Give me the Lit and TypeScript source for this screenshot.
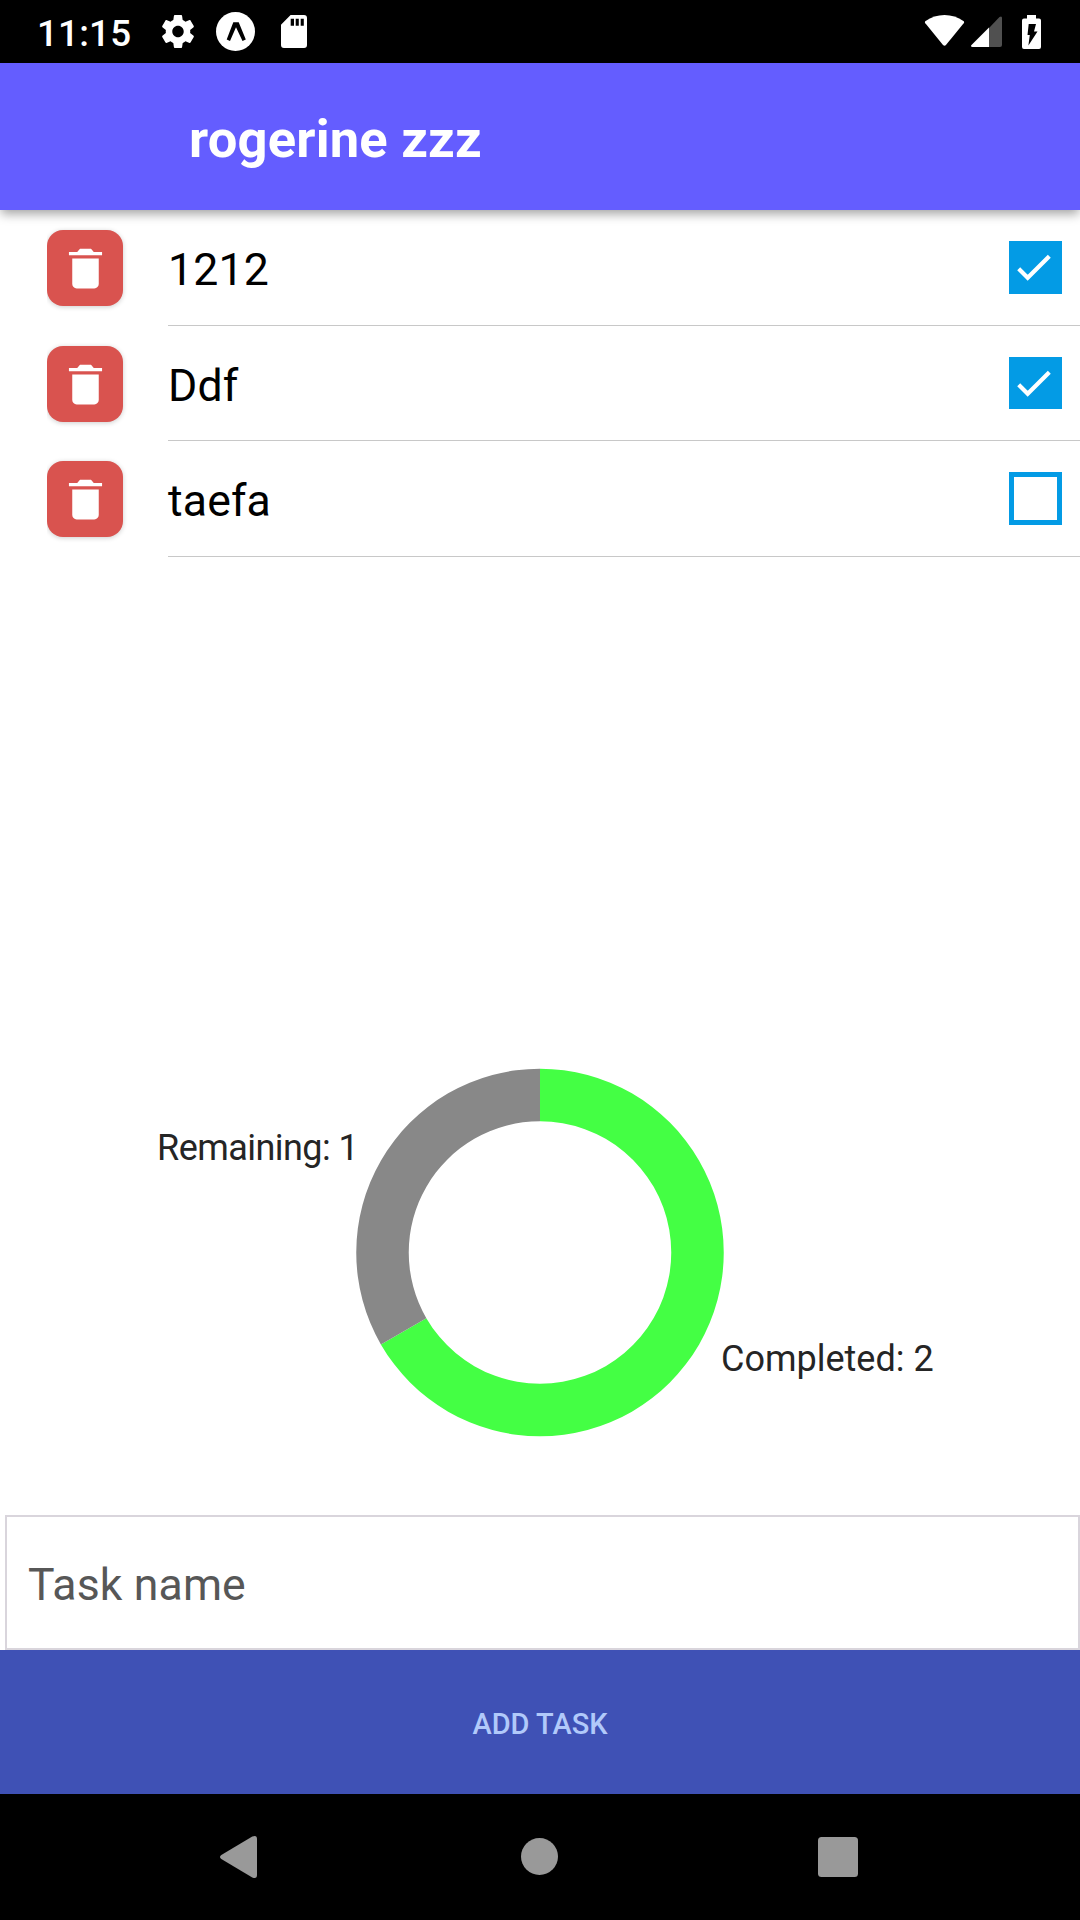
import { LitElement, html, svg, css } from "lit";
import { customElement, property, state } from "lit/decorators.js";

interface Task {
  name: string;
  done: boolean;
}

@customElement("status-bar")
class StatusBar extends LitElement {
  static styles = css`
    :host { display: block; height: 63px; background: #000; }
    .bar { display: flex; align-items: center; height: 63px; box-sizing: border-box; padding: 0 39px 0 37px; }
    .time { color: #fff; font-size: 36.75px; font-weight: 500; line-height: 59px; letter-spacing: 0.2px; padding-top: 4px; width: 125px; }
    svg { display: block; flex: none; }
    .expo { margin-left: 22px; }
    .sd { margin-left: 26px; }
    .spacer { flex: 1; }
    .wifi { margin-bottom: 2px; }
    .signal { margin-left: 6px; }
    .battery { margin-left: 20px; }
  `;
  render() {
    return html`<div class="bar">
      <div class="time">11:15</div>
      <svg width="32" height="33" viewBox="2.2 2 19.6 20" preserveAspectRatio="none">
        <path fill="#fff" d="M19.43 12.98c.04-.32.07-.64.07-.98s-.03-.66-.07-.98l2.11-1.65c.19-.15.24-.42.12-.64l-2-3.46c-.12-.22-.39-.3-.61-.22l-2.49 1c-.52-.4-1.08-.73-1.69-.98l-.38-2.65C14.46 2.18 14.25 2 14 2h-4c-.25 0-.46.18-.49.42l-.38 2.65c-.61.25-1.17.59-1.69.98l-2.49-1c-.23-.09-.49 0-.61.22l-2 3.46c-.13.22-.07.49.12.64l2.11 1.65c-.04.32-.07.65-.07.98s.03.66.07.98l-2.11 1.65c-.19.15-.24.42-.12.64l2 3.46c.12.22.39.3.61.22l2.49-1c.52.4 1.08.73 1.69.98l.38 2.65c.03.24.24.42.49.42h4c.25 0 .46-.18.49-.42l.38-2.65c.61-.25 1.17-.59 1.69-.98l2.49 1c.23.09.49 0 .61-.22l2-3.46c.12-.22.07-.49-.12-.64l-2.11-1.65zM12 15.5c-1.93 0-3.5-1.57-3.5-3.5s1.57-3.5 3.5-3.5 3.5 1.57 3.5 3.5-1.57 3.5-3.5 3.5z"/>
      </svg>
      <svg class="expo" width="39" height="39" viewBox="0 0 39 39">
        <circle cx="19.5" cy="19.5" r="19.5" fill="#fff"/>
        <path fill="#000" d="M17.3 10.3h5.4l7.1 17.2-3.3 1.500L20 15.300 14 29l-3.300-1.500z"/>
      </svg>
      <svg class="sd" width="26" height="33" viewBox="0 0 26 33">
        <path fill="#fff" fill-rule="evenodd" d="M9.600 0H23q3 0 3 3v27q0 3-3 3H3q-3 0-3-3V9.700zM9.700 3.700v7h3.300v-7zM14.700 3.700v7h3.100v-7zM19.700 3.700v7h3.100v-7z"/>
      </svg>
      <div class="spacer"></div>
      <svg class="wifi" width="41" height="32" viewBox="0 0 41 33">
        <path fill="#fff" d="M1 6.300C12-2.100 29-2.100 40 6.300q1.300 1 .3 2.300L22 31q-1.500 1.600-3 0L.7 8.600Q-.3 7.300 1 6.300z"/>
      </svg>
      <svg class="signal" width="31" height="31" viewBox="0 0 31 31">
        <path fill="#505050" d="M18 12L28.500 1q2.500-1.500 2.500 1v27q0 2-2 2H18z"/>
        <path fill="#fff" d="M18 11.500V31H1.500Q-.8 30.500.5 29z"/>
      </svg>
      <svg class="battery" width="19" height="34" viewBox="0 0 19 34">
        <path fill="#fff" d="M5 0h9v3.500h3q2 0 2 2V32q0 2-2 2H2q-2 0-2-2V5.500q0-2 2-2h3z"/>
        <path fill="#000" d="M6.700 9h7.300l-2 7.500h3.500L6.400 30.500l1.400-10.500H5.500z"/>
      </svg>
    </div>`;
  }
}

@customElement("task-row")
class TaskRow extends LitElement {
  @property() name = "";
  @property({ type: Boolean }) done = false;

  static styles = css`
    :host { display: flex; height: 116px; padding-left: 47px; box-sizing: border-box; }
    .remove {
      margin: 20px 45px 0 0; padding: 0; border: 0; width: 76px; height: 76px; flex: none;
      border-radius: 16px; background: #d9534f; display: flex; align-items: center; justify-content: center;
      box-shadow: 0 1px 5px rgba(0, 0, 0, 0.2); clip-path: inset(-12px -12px -12px 0);
    }
    .body { flex: 1; display: flex; box-sizing: border-box; border-bottom: 1px solid #c8c8c8; padding: 31px 18px 31px 0; }
    .name { flex: 1; font-size: 44.6px; line-height: 53px; letter-spacing: 0.15px; padding-top: 3px; height: 50px; color: #000; }
    .box { width: 53px; box-sizing: border-box; border: 5px solid #039be5; }
    .checked { border: 0; background: #039be5; }
    .box svg { display: block; }
  `;
  render() {
    return html`
      <button class="remove" aria-label="Delete">
        <svg width="53" height="53" viewBox="0 0 512 512">
          <path fill="#fff" d="M128 405.429C128 428.846 147.198 448 170.667 448h170.667C364.802 448 384 428.846 384 405.429V160H128v245.429zM416 96h-80l-26.785-32H202.786L176 96H96v32h320V96z"/>
        </svg>
      </button>
      <div class="body">
        <div class="name">${this.name}</div>
        ${this.done
          ? html`<div class="box checked">
              <svg width="53" height="52" viewBox="0 0 53 52">
                <path fill="none" stroke="#fff" stroke-width="4.200" d="M9.700 27.700l9 9L40.300 15.300"/>
              </svg>
            </div>`
          : html`<div class="box"></div>`}
      </div>`;
  }
}

@customElement("task-chart")
class TaskChart extends LitElement {
  @property({ type: Number }) completed = 0;
  @property({ type: Number }) remaining = 0;

  static styles = css`
    :host { display: block; height: 525px; }
    svg { display: block; }
    text { font-size: 36px; fill: #252525; }
    .tight { letter-spacing: -0.55px; }
  `;

  private slice(from: number, to: number, color: string) {
    const at = (r: number, t: number) => {
      const a = t * Math.PI * 2;
      return `${540 + r * Math.sin(a)} ${262.5 - r * Math.cos(a)}`;
    };
    const large = to - from > 0.5 ? 1 : 0;
    const outer = 183.75;
    const inner = 131.25;
    return svg`<path fill=${color} d=${`M${at(outer, from)}A${outer} ${outer} 0 ${large} 1 ${at(outer, to)}L${at(inner, to)}A${inner} ${inner} 0 ${large} 0 ${at(inner, from)}Z`}/>`;
  }

  render() {
    const share = this.completed / (this.completed + this.remaining);
    return html`<svg width="1080" height="525" viewBox="0 0 1080 525">
      ${this.slice(0, share, "#44ff44")}
      ${this.slice(share, 1, "#888888")}
      <text class="tight" x="157" y="170.300">Remaining: ${this.remaining}</text>
      <text x="721" y="380.600">Completed: ${this.completed}</text>
    </svg>`;
  }
}

@customElement("app-root")
class AppRoot extends LitElement {
  @state() private tasks: Task[] = [
    { name: "1212", done: true },
    { name: "Ddf", done: true },
    { name: "taefa", done: false },
  ];

  static styles = css`
    :host {
      display: flex; flex-direction: column; width: 1080px; height: 1920px; overflow: hidden;
      background: #fff; font-family: Roboto, sans-serif;
    }
    .header {
      height: 147px; box-sizing: border-box; padding: 5px 0 0 189px; background: #645dff; color: #fff;
      font-size: 52.5px; font-weight: 700; line-height: 142px; letter-spacing: 0.2px; position: relative; z-index: 1;
      box-shadow: 0 5px 10px -1px rgba(0, 0, 0, 0.36);
    }
    .list { flex: 1; }
    .list task-row:nth-child(even) { height: 115px; }
    .field {
      margin-left: 5px; height: 135px; box-sizing: border-box; border: 2px solid #d9d5dc;
      padding: 5px 0 0 21px; font-size: 44.6px; line-height: 127px; letter-spacing: 0.13px; color: #575757;
    }
    .add {
      height: 144px; box-sizing: border-box; border: 0; padding: 4px 0 0; background: #3f51b5;
      color: #b1c9fa; font: 500 29px/140px Roboto, sans-serif; text-align: center;
    }
    .nav { height: 126px; box-sizing: border-box; padding-left: 220px; background: #000; display: flex; align-items: center; }
    .home { margin: 0 260px 1px 264px; }
  `;

  render() {
    const completed = this.tasks.filter((t) => t.done).length;
    return html`
      <status-bar></status-bar>
      <div class="header">rogerine zzz</div>
      <div class="list">
        ${this.tasks.map((t) => html`<task-row .name=${t.name} .done=${t.done}></task-row>`)}
      </div>
      <task-chart .completed=${completed} .remaining=${this.tasks.length - completed}></task-chart>
      <div class="field">Task name</div>
      <button class="add">ADD TASK</button>
      <div class="nav">
        <svg width="37" height="42" viewBox="0 0 37 42">
          <path fill="#999" d="M1.300 19L32.300.6Q37-1.200 37 3v36q0 4.200-4.700 2.400L1.300 23q-2.600-2 0-4z"/>
        </svg>
        <svg class="home" width="37" height="37" viewBox="0 0 37 37"><circle cx="18.500" cy="18.500" r="18.500" fill="#999"/></svg>
        <svg width="40" height="40" viewBox="0 0 40 40"><rect width="40" height="40" rx="3.500" fill="#999"/></svg>
      </div>
    `;
  }
}
